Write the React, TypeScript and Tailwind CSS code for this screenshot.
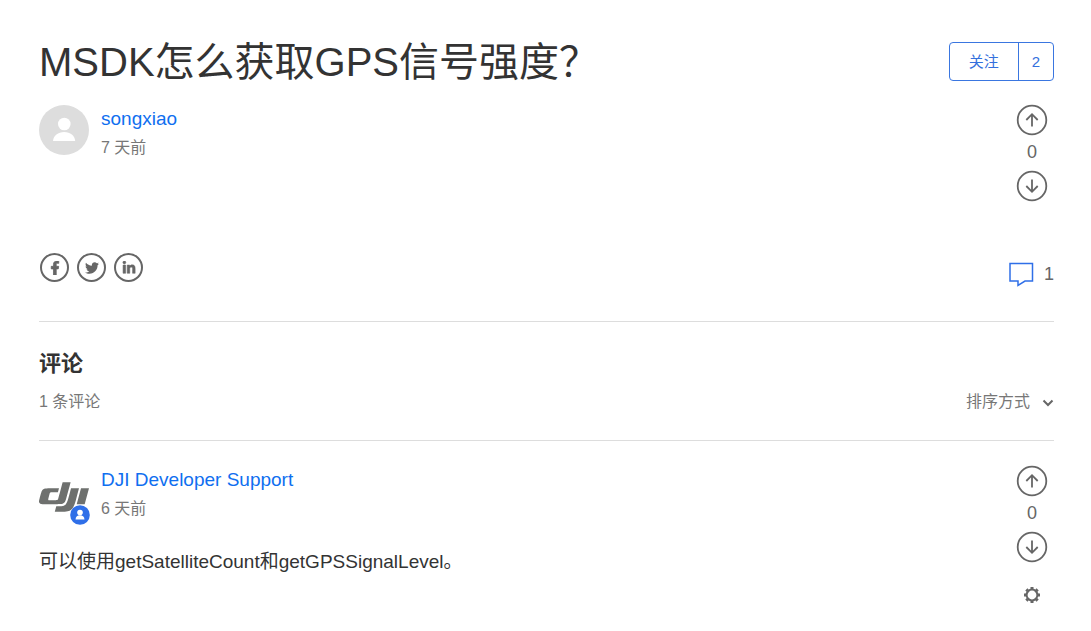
import React, { useState } from "react";
import { FaFacebookF, FaTwitter, FaLinkedinIn } from "react-icons/fa";
import { SiDji } from "react-icons/si";

const VoteArrow = ({ down = false }: { down?: boolean }) => (
  <svg
    viewBox="0 0 32 32"
    className={down ? "w-8 h-8 rotate-180" : "w-8 h-8"}
    fill="none"
    stroke="currentColor"
    aria-hidden="true"
  >
    <circle cx="16" cy="16" r="14.3" strokeWidth="1.8" />
    <path d="M16 22.500V10.500M10.300 16L16 10.200l5.700 5.800" strokeWidth="1.800" />
  </svg>
);

const Votes = () => {
  const [vote, setVote] = useState(0);

  return (
    <div className="w-8 flex flex-col items-center text-[#666]">
      <button
        aria-label="赞成"
        className="cursor-pointer"
        onClick={() => setVote((prev) => (prev === 1 ? 0 : 1))}
      >
        <VoteArrow />
      </button>
      <span className="h-[34px] text-lg leading-8">{vote}</span>
      <button
        aria-label="反对"
        className="cursor-pointer"
        onClick={() => setVote((prev) => (prev === -1 ? 0 : -1))}
      >
        <VoteArrow down />
      </button>
    </div>
  );
};

const Author = ({ name, time }: { name: string; time: string }) => (
  <div className="flex flex-col pt-px">
    <a href="#" className="text-[19px] leading-7 text-[#0f6ff0]">
      {name}
    </a>
    <span className="text-base leading-[30px] text-[#777]">{time}</span>
  </div>
);

const shares = [
  {
    label: "Facebook",
    icon: <FaFacebookF size={14} stroke="currentColor" strokeWidth={30} />,
  },
  { label: "Twitter", icon: <FaTwitter size={14} /> },
  {
    label: "LinkedIn",
    icon: <FaLinkedinIn size={14} stroke="currentColor" strokeWidth={20} />,
  },
];

const App = () => {
  const [following, setFollowing] = useState(false);

  return (
    <main className="w-full bg-white pl-[39px] pr-[37px] pt-10 pb-4 font-['Liberation_Sans','Noto_Sans_CJK_SC',sans-serif] text-[#333]">
      <article>
        <header className="flex justify-between items-start">
          <h1 className="text-[40px] leading-[44px]">
            MSDK怎么获取GPS信号强度？
          </h1>
          <button
            className="mt-0.5 flex h-[39px] shrink-0 items-center rounded border border-[#3a76e0] text-[15px] text-[#3470dd] cursor-pointer"
            aria-pressed={following}
            onClick={() => setFollowing((prev) => !prev)}
          >
            <span className="px-[19px] pt-0.5">关注</span>
            <span className="flex h-full items-center border-l border-[#3a76e0] px-[13px] pt-0.5">
              2
            </span>
          </button>
        </header>

        <div className="mt-5 flex justify-between pr-[6px]">
          <div className="flex gap-3">
            <svg
              viewBox="0 0 50 50"
              className="mt-px w-[50px] h-[50px]"
              role="img"
              aria-label="songxiao"
            >
              <circle cx="25" cy="25" r="25" fill="#ddd" />
              <circle cx="25.3" cy="19" r="6.3" fill="#fff" />
              <path
                d="M14 36c.5-5.500 5-9 11.200-9s10.500 3.500 11 9z"
                fill="#fff"
              />
            </svg>
            <Author name="songxiao" time="7 天前" />
          </div>
          <Votes />
        </div>

        <footer className="mt-[50px] flex justify-between border-b border-[#ddd] pb-[33px]">
          <div className="flex gap-2 pl-px pt-px">
            {shares.map((share) => (
              <a
                key={share.label}
                href="#"
                aria-label={share.label}
                className="flex h-[29px] w-[29px] items-center justify-center rounded-full border-2 border-[#666] text-[#666]"
              >
                {share.icon}
              </a>
            ))}
          </div>
          <a href="#comments" className="mt-2 flex h-7 items-center gap-[10px]">
            <svg
              viewBox="0 0 26 26"
              className="w-[26px] h-[26px]"
              fill="none"
              stroke="#2f6fe8"
              strokeWidth="1.500"
              aria-hidden="true"
            >
              <path d="M2 2.500H24.500V20H17L10 24.500V20H2Z" />
            </svg>
            <span className="text-lg leading-7 text-[#666]">1</span>
          </a>
        </footer>
      </article>

      <section id="comments">
        <div className="border-b border-[#ddd] pt-[26px] pb-6">
          <h2 className="text-[22px] font-bold leading-8">评论</h2>
          <div className="mt-2 flex justify-between text-base leading-7 text-[#777]">
            <span>1 条评论</span>
            <button className="flex items-center gap-3 cursor-pointer">
              排序方式
              <svg
                viewBox="0 0 12 12"
                className="mt-0.5 w-3 h-3"
                fill="none"
                stroke="#666"
                strokeWidth="2"
                aria-hidden="true"
              >
                <path d="M1.500 3.500L6 8l4.500-4.500" />
              </svg>
            </button>
          </div>
        </div>

        <div className="flex justify-between pt-6 pr-[6px]">
          <div>
            <div className="flex gap-3">
              <div className="relative w-[50px] h-[60px] pt-[7px] text-[#6e706e]">
                <SiDji size={50} title="DJI" />
                <span className="absolute right-[-1px] bottom-0 rounded-full">
                  <svg viewBox="0 0 20 20" className="w-5 h-5" aria-hidden="true">
                    <circle cx="10" cy="10" r="9.800" fill="#2f6fe8" />
                    <circle cx="10" cy="7.500" r="2.800" fill="#fff" />
                    <path d="M5.500 14.500c.2-2.800 2-4.200 4.500-4.200s4.300 1.400 4.500 4.200z" fill="#fff" />
                  </svg>
                </span>
              </div>
              <Author name="DJI Developer Support" time="6 天前" />
            </div>
            <p className="mt-[23px] text-[19px] leading-7">
              可以使用getSatelliteCount和getGPSSignalLevel。
            </p>
          </div>
          <div className="flex flex-col items-center">
            <Votes />
            <button
              aria-label="设置"
              className="mt-[22px] flex h-5 w-5 items-center justify-center cursor-pointer"
            >
              <svg viewBox="0 0 18 18" className="w-[18px] h-[18px]" fill="none" stroke="#666" aria-hidden="true">
                <circle cx="9" cy="9" r="5.400" strokeWidth="2" />
                <path
                  d="M9 1v2.500M9 14.500V17M1 9h2.500M14.500 9H17M3.340 3.340l1.500 1.500M13.160 13.160l1.500 1.500M3.340 14.660l1.500-1.500M13.160 4.840l1.500-1.500"
                  strokeWidth="3"
                />
              </svg>
            </button>
          </div>
        </div>
      </section>
    </main>
  );
};

export default App;
